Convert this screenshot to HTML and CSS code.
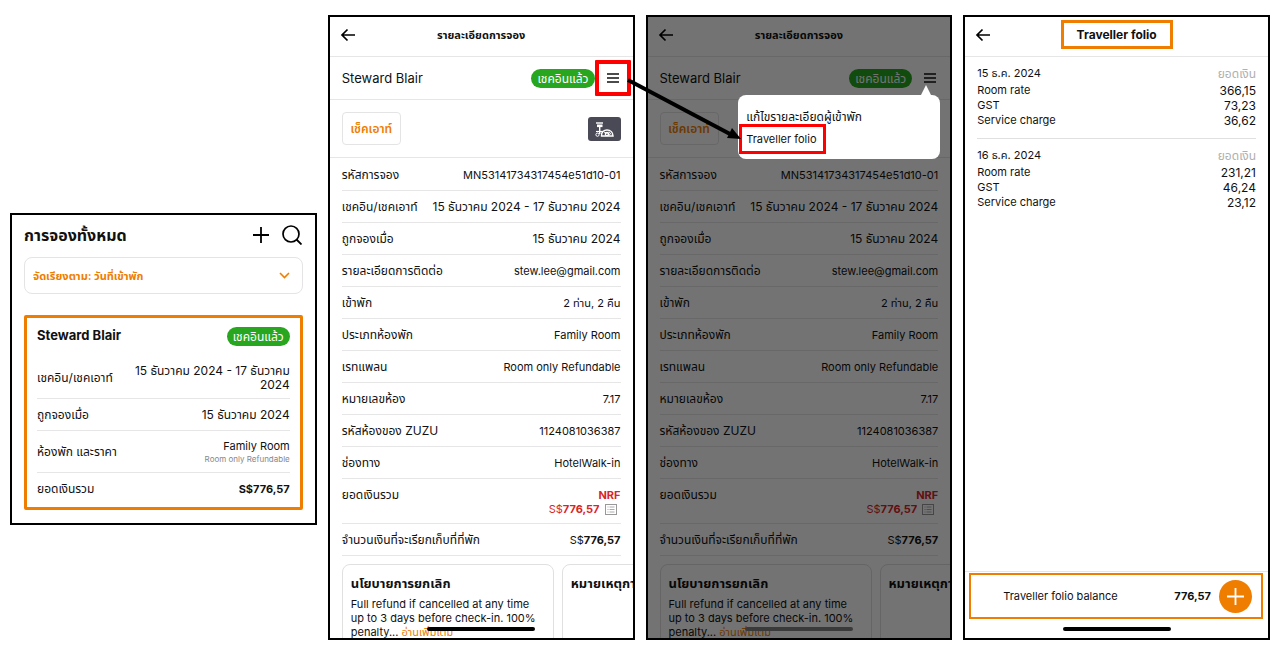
FILE: index.html
```html
<!DOCTYPE html>
<html lang="th">
<head>
    <meta charset="UTF-8">
    <meta name="viewport" content="width=device-width, initial-scale=1.0">
    <title>Traveller folio</title>
    <link rel="stylesheet" href="styles.css">
</head>
<body>

    <main class="flow">

        <!-- Booking list -->
        <section class="screen screen-list">
            <div class="list-header">
                <h1>การจองทั้งหมด</h1>
                <button class="icon-btn" aria-label="Add">
                    <svg width="18" height="18" viewBox="0 0 18 18"><path d="M9 1v16M1 9h16" stroke="#000" stroke-width="1.8" fill="none"/></svg>
                </button>
                <button class="icon-btn" aria-label="Search">
                    <svg width="20" height="20" viewBox="0 0 20 20"><circle cx="9" cy="9" r="8" stroke="#000" stroke-width="1.7" fill="none"/><path d="M14.500 14.500l5 5" stroke="#000" stroke-width="1.8"/></svg>
                </button>
            </div>
            <div class="sort">
                <select aria-label="จัดเรียงตาม">
                    <option>จัดเรียงตาม: วันที่เข้าพัก</option>
                </select>
                <svg class="sort-arrow" width="11" height="7" viewBox="0 0 11 7"><path d="M1 1l4.500 4.500L10 1" stroke="#ef7d00" stroke-width="1.6" fill="none"/></svg>
            </div>
            <article class="booking">
                <div class="booking-head">
                    <h2>Steward Blair</h2>
                    <span class="badge">เชคอินแล้ว</span>
                </div>
                <dl class="booking-rows">
                    <div class="tall"><dt>เชคอิน/เชคเอาท์</dt><dd class="date">15 ธันวาคม 2024 - 17 ธันวาคม 2024</dd></div>
                    <div><dt>ถูกจองเมื่อ</dt><dd class="date">15 ธันวาคม 2024</dd></div>
                    <div class="tall"><dt>ห้องพัก และราคา</dt><dd>Family Room<small>Room only Refundable</small></dd></div>
                    <div><dt>ยอดเงินรวม</dt><dd><b>S$776,57</b></dd></div>
                </dl>
            </article>
        </section>

        <!-- Booking detail -->
        <section class="screen">
            <header class="topbar">
                <button class="back" aria-label="Back"><svg width="16" height="14" viewBox="0 0 16 14"><path d="M15 7H2M7.500 1.500L2 7l5.500 5.500" stroke="#000" stroke-width="1.7" fill="none"/></svg></button>
                <h1>รายละเอียดการจอง</h1>
            </header>
            <div class="guest">
                <h2>Steward Blair</h2>
                <span class="badge">เชคอินแล้ว</span>
                <button class="menu-btn marked" aria-label="Menu"><svg width="12" height="10" viewBox="0 0 12 10"><path d="M0 1h12M0 5h12M0 9h12" stroke="#111" stroke-width="1.6"/></svg></button>
            </div>
            <div class="actions">
                <button class="checkout">เช็คเอาท์</button>
                <button class="device" aria-label="Key card"><svg width="33" height="24" viewBox="0 0 33 24"><g stroke="#fff" fill="none"><path d="M8 6h7" stroke-width="1.400"/><path d="M9 8.800h5.500" stroke-width="2.600"/><path d="M11.700 9v8" stroke-width="1.400"/><path d="M8 14.500h7" stroke-width="1.200"/><circle cx="9.500" cy="17.700" r="1.600"/><path d="M13.500 19c-.5-4 2.500-6 5.500-6 3.500 0 6 2.500 6 6z" stroke-width="1.500"/><circle cx="19" cy="17" r="1.700" stroke-width="1.300"/><path d="M16 15l6 3M21 14.500l2 3"/></g></svg></button>
            </div>
            <dl class="rows">
                <div><dt>รหัสการจอง</dt><dd>MN53141734317454e51d10-01</dd></div>
                <div><dt>เชคอิน/เชคเอาท์</dt><dd class="date">15 ธันวาคม 2024 - 17 ธันวาคม 2024</dd></div>
                <div><dt>ถูกจองเมื่อ</dt><dd class="date">15 ธันวาคม 2024</dd></div>
                <div><dt>รายละเอียดการติดต่อ</dt><dd>stew.lee@gmail.com</dd></div>
                <div><dt>เข้าพัก</dt><dd>2 ท่าน, 2 คืน</dd></div>
                <div><dt>ประเภทห้องพัก</dt><dd>Family Room</dd></div>
                <div><dt>เรทแพลน</dt><dd>Room only Refundable</dd></div>
                <div><dt>หมายเลขห้อง</dt><dd>7.17</dd></div>
                <div><dt>รหัสห้องของ ZUZU</dt><dd>1124081036387</dd></div>
                <div><dt>ช่องทาง</dt><dd>HotelWalk-in</dd></div>
                <div class="total"><dt>ยอดเงินรวม</dt><dd><b>NRF</b><span class="amount">S$<b>776,57</b><svg width="12" height="11" viewBox="0 0 12 11"><rect x=".5" y=".5" width="11" height="10" fill="none" stroke="#999"/><path d="M2.500 3h1M4.500 3h5M2.500 5.500h1M4.500 5.500h5M2.500 8h1M4.500 8h5" stroke="#aaa"/></svg></span></dd></div>
                <div><dt>จำนวนเงินที่จะเรียกเก็บที่ที่พัก</dt><dd>S$<b>776,57</b></dd></div>
            </dl>
            <div class="cards">
                <article class="card">
                    <h3>นโยบายการยกเลิก</h3>
                    <p>Full refund if cancelled at any time up to 3 days before check-in. 100% penalty... <a href="#">อ่านเพิ่มเติม</a></p>
                </article>
                <article class="card">
                    <h3>หมายเหตุการจอง</h3>
                </article>
            </div>
            <div class="home-bar"></div>
        </section>

        <!-- Booking detail with the menu open -->
        <section class="screen screen-menu">
            <header class="topbar">
                <button class="back" aria-label="Back"><svg width="16" height="14" viewBox="0 0 16 14"><path d="M15 7H2M7.500 1.500L2 7l5.500 5.500" stroke="#000" stroke-width="1.7" fill="none"/></svg></button>
                <h1>รายละเอียดการจอง</h1>
            </header>
            <div class="guest">
                <h2>Steward Blair</h2>
                <span class="badge">เชคอินแล้ว</span>
                <button class="menu-btn" aria-label="Menu"><svg width="12" height="10" viewBox="0 0 12 10"><path d="M0 1h12M0 5h12M0 9h12" stroke="#111" stroke-width="1.6"/></svg></button>
            </div>
            <div class="actions">
                <button class="checkout">เช็คเอาท์</button>
            </div>
            <dl class="rows">
                <div><dt>รหัสการจอง</dt><dd>MN53141734317454e51d10-01</dd></div>
                <div><dt>เชคอิน/เชคเอาท์</dt><dd class="date">15 ธันวาคม 2024 - 17 ธันวาคม 2024</dd></div>
                <div><dt>ถูกจองเมื่อ</dt><dd class="date">15 ธันวาคม 2024</dd></div>
                <div><dt>รายละเอียดการติดต่อ</dt><dd>stew.lee@gmail.com</dd></div>
                <div><dt>เข้าพัก</dt><dd>2 ท่าน, 2 คืน</dd></div>
                <div><dt>ประเภทห้องพัก</dt><dd>Family Room</dd></div>
                <div><dt>เรทแพลน</dt><dd>Room only Refundable</dd></div>
                <div><dt>หมายเลขห้อง</dt><dd>7.17</dd></div>
                <div><dt>รหัสห้องของ ZUZU</dt><dd>1124081036387</dd></div>
                <div><dt>ช่องทาง</dt><dd>HotelWalk-in</dd></div>
                <div class="total"><dt>ยอดเงินรวม</dt><dd><b>NRF</b><span class="amount">S$<b>776,57</b><svg width="12" height="11" viewBox="0 0 12 11"><rect x=".5" y=".5" width="11" height="10" fill="none" stroke="#999"/><path d="M2.500 3h1M4.500 3h5M2.500 5.500h1M4.500 5.500h5M2.500 8h1M4.500 8h5" stroke="#aaa"/></svg></span></dd></div>
                <div><dt>จำนวนเงินที่จะเรียกเก็บที่ที่พัก</dt><dd>S$<b>776,57</b></dd></div>
            </dl>
            <div class="cards">
                <article class="card">
                    <h3>นโยบายการยกเลิก</h3>
                    <p>Full refund if cancelled at any time up to 3 days before check-in. 100% penalty... <a href="#">อ่านเพิ่มเติม</a></p>
                </article>
                <article class="card">
                    <h3>หมายเหตุการจอง</h3>
                </article>
            </div>
            <div class="overlay"></div>
            <div class="home-bar"></div>
            <nav class="popup">
                <a href="#">แก้ไขรายละเอียดผู้เข้าพัก</a>
                <a href="#" class="marked">Traveller folio</a>
            </nav>
            <svg class="pointer" width="116" height="66" viewBox="0 0 116 66"><path d="M2 3L104 57" stroke="#000" stroke-width="4"/><path d="M115 62L101 61L106 51z" fill="#000"/></svg>
        </section>

        <!-- Folio -->
        <section class="screen">
            <header class="topbar">
                <button class="back" aria-label="Back"><svg width="16" height="14" viewBox="0 0 16 14"><path d="M15 7H2M7.500 1.500L2 7l5.500 5.500" stroke="#000" stroke-width="1.7" fill="none"/></svg></button>
                <h1 class="boxed">Traveller folio</h1>
            </header>
            <div class="folio">
                <table>
                    <thead><tr><th>15 ธ.ค. 2024</th><th>ยอดเงิน</th></tr></thead>
                    <tbody>
                        <tr><td>Room rate</td><td>366,15</td></tr>
                        <tr><td>GST</td><td>73,23</td></tr>
                        <tr><td>Service charge</td><td>36,62</td></tr>
                    </tbody>
                </table>
                <table>
                    <thead><tr><th>16 ธ.ค. 2024</th><th>ยอดเงิน</th></tr></thead>
                    <tbody>
                        <tr><td>Room rate</td><td>231,21</td></tr>
                        <tr><td>GST</td><td>46,24</td></tr>
                        <tr><td>Service charge</td><td>23,12</td></tr>
                    </tbody>
                </table>
            </div>
            <footer class="balance-bar">
                <div class="balance">
                    <span>Traveller folio balance</span>
                    <b>776,57</b>
                    <button class="add" aria-label="Add charge"><svg width="17" height="17" viewBox="0 0 17 17"><path d="M8.500 0v17M0 8.500h17" stroke="#fff" stroke-width="1.8"/></svg></button>
                </div>
            </footer>
            <div class="home-bar"></div>
        </section>

    </main>

</body>
</html>
```

FILE: styles.css
```css
* {
    box-sizing: border-box;
}
body {
    margin: 0;
    background: white;
    color: #111;
    font-family: Inter, "Noto Sans Thai", "Noto Sans", sans-serif;
    font-size: 12px;
    line-height: 14px;
}
h1, h2, h3, p, dl, dd {
    margin: 0;
}
button {
    padding: 0;
    border: none;
    background: none;
    font: inherit;
    color: inherit;
    cursor: pointer;
}
svg {
    display: block;
}
a {
    color: inherit;
    text-decoration: none;
}
.flow {
    display: grid;
    grid-template-columns: repeat(4, minmax(0, 1fr));
    gap: 11px;
    padding: 15px 9px 17px 10px;
    height: 100vh;
}
.screen {
    position: relative;
    display: flex;
    flex-direction: column;
    min-height: 0;
    border: 2px solid black;
    background: white;
}

/* booking list */
.screen-list {
    align-self: start;
    margin-top: 198px;
    padding: 0 12px 13px;
}
.list-header {
    display: flex;
    align-items: center;
    gap: 12px;
    height: 42px;
    padding: 0 1px 3px 0;
}
.list-header h1 {
    flex: 1;
    font-size: 16px;
    line-height: 24px;
}
.sort {
    position: relative;
}
.sort select {
    appearance: none;
    width: 100%;
    height: 37px;
    padding: 0 8px;
    border: 1px solid #e4e4e4;
    border-radius: 8px;
    background: white;
    color: #ef7d00;
    font: bold 11px Inter, "Noto Sans Thai", "Noto Sans", sans-serif;
}
.sort-arrow {
    position: absolute;
    right: 13px;
    top: 15px;
    pointer-events: none;
}
.booking {
    margin-top: 21px;
    padding: 9px 10px 2px;
    border: 3px solid #ef7d00;
    border-radius: 2px;
}
.booking-head {
    display: flex;
    justify-content: space-between;
    height: 30px;
}
.booking-head h2 {
    font-size: 13px;
    line-height: 16px;
}
.badge {
    height: 19px;
    padding: 0 6px;
    border-radius: 10px;
    background: #28a61f;
    color: white;
    line-height: 19px;
    white-space: nowrap;
}
.booking-rows div, .rows div {
    display: flex;
    align-items: center;
    justify-content: space-between;
    min-height: 32px;
    border-bottom: 1px solid #e6e6e6;
}
.booking-rows .tall {
    min-height: 42px;
}
.booking-rows div:last-child {
    border-bottom: none;
}
dt {
    white-space: nowrap;
}
dd {
    font-size: 11px;
    text-align: right;
}
dd.date {
    font-size: 12px;
}
.booking-rows dd {
    max-width: 155px;
}
dd small {
    display: block;
    color: #888;
    font-size: 8px;
    line-height: 12px;
}

/* booking detail */
.topbar {
    position: relative;
    display: flex;
    align-items: center;
    justify-content: center;
    height: 40px;
    flex-shrink: 0;
    padding-bottom: 4px;
    border-bottom: 1px solid #e6e6e6;
}
.topbar h1 {
    font-size: 11px;
    line-height: 14px;
}
.topbar .boxed {
    padding: 4px 13px;
    border: 3px solid #ef7d00;
    font-size: 12px;
    line-height: 15px;
}
.back {
    position: absolute;
    left: 10px;
}
.guest {
    display: flex;
    align-items: center;
    height: 43px;
    flex-shrink: 0;
    padding: 0 14px 0 12px;
    border-bottom: 1px solid #e6e6e6;
}
.guest h2 {
    flex: 1;
    font-size: 13px;
    font-weight: 400;
}
.menu-btn {
    position: relative;
    margin-left: 12px;
}
.menu-btn.marked::after {
    content: "";
    position: absolute;
    inset: -13px -12px;
    border: 4px solid red;
    border-radius: 1px;
}
.actions {
    display: flex;
    align-items: center;
    justify-content: space-between;
    height: 58px;
    flex-shrink: 0;
    padding: 0 12px;
    border-bottom: 1px solid #e6e6e6;
}
.checkout {
    width: 59px;
    height: 33px;
    border: 1px solid #e4e4e4;
    border-radius: 4px;
    color: #ef7d00;
    font-weight: 600;
}
.device {
    border-radius: 3px;
    background: #4a4a57;
}
.rows {
    margin: 0 12px;
    padding-top: 1px;
}
.rows .total {
    align-items: flex-start;
    min-height: 45px;
    padding-top: 9px;
}
.total dd {
    color: #d9252a;
}
.amount {
    display: flex;
    align-items: center;
    padding-right: 4px;
}
.amount svg {
    margin-left: 5px;
}
.cards {
    display: flex;
    gap: 8px;
    flex: 1;
    min-height: 0;
    overflow: hidden;
    padding: 8px 0 0 12px;
}
.card {
    flex: 0 0 212px;
    min-height: 90px;
    padding: 8px;
    border: 1px solid #e0e0e0;
    border-radius: 8px;
    font-size: 11px;
}
.card h3 {
    margin-bottom: 4px;
    font-size: 13px;
    line-height: 20px;
    white-space: nowrap;
}
.card a {
    color: #ef7d00;
}
.home-bar {
    position: absolute;
    left: 50%;
    bottom: 7px;
    width: 108px;
    height: 4px;
    margin-left: -54px;
    border-radius: 2px;
    background: black;
}

/* open menu */
.overlay {
    position: absolute;
    inset: 0;
    background: rgba(0, 0, 0, 0.55);
}
.screen-menu .home-bar {
    background: #3a3a3a;
}
.popup {
    position: absolute;
    top: 78px;
    right: 10px;
    display: flex;
    flex-direction: column;
    width: 202px;
    height: 64px;
    padding: 15px 8px;
    border-radius: 8px;
    background: white;
    gap: 8px;
}
.popup::before {
    content: "";
    position: absolute;
    top: -10px;
    right: 9px;
    border: 5px solid transparent;
    border-top: none;
    border-bottom: 10px solid white;
}
.popup a {
    position: relative;
    align-self: flex-start;
}
.popup .marked {
    font-size: 11px;
}
.popup .marked::after {
    content: "";
    position: absolute;
    inset: -8px -9px -8px -7px;
    border: 3px solid red;
}
.pointer {
    position: absolute;
    left: -22px;
    top: 60px;
}

/* folio */
.folio {
    flex: 1;
    padding: 0 12px;
}
.folio table {
    width: 100%;
    padding: 7px 0 10px;
    border-spacing: 0;
}
.folio table + table {
    border-top: 1px solid #e0e0e0;
}
.folio th, .folio td {
    height: 15px;
    padding: 0;
    font-size: 11px;
    line-height: 15px;
    text-align: left;
    font-weight: normal;
}
.folio th {
    height: 19px;
}
.folio th:last-child, .folio td:last-child {
    font-size: 12px;
    text-align: right;
}
.folio th:last-child {
    color: #b0b0b0;
}
.balance-bar {
    padding: 1px 5px 19px 4px;
    border-top: 1px solid #e6e6e6;
}
.balance {
    display: flex;
    align-items: center;
    height: 46px;
    padding: 0 9px 0 32px;
    border: 2px solid #ef7d00;
    font-size: 11px;
}
.balance span {
    flex: 1;
}
.add {
    display: flex;
    align-items: center;
    justify-content: center;
    width: 33px;
    height: 33px;
    margin-left: 8px;
    border-radius: 50%;
    background: #ef7d00;
}
```
